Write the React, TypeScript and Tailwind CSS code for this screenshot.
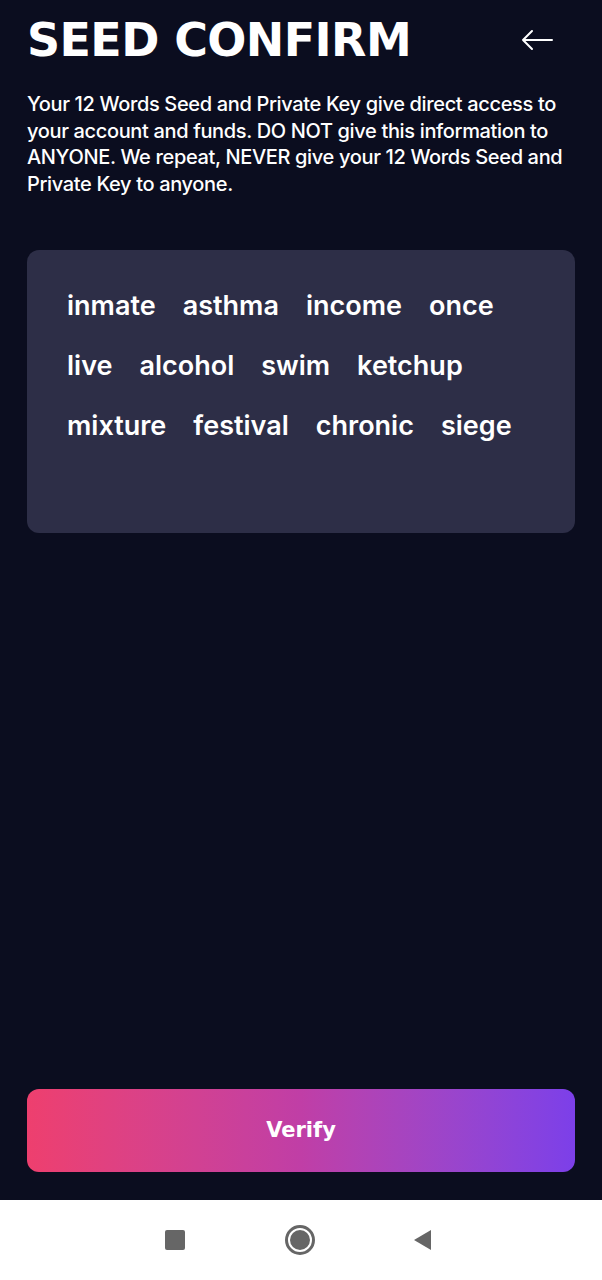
const words = [
  ["inmate", "asthma", "income", "once"],
  ["live", "alcohol", "swim", "ketchup"],
  ["mixture", "festival", "chronic", "siege"],
];

export default function App() {
  return (
    <div className="flex h-[1280px] w-[602px] flex-col bg-[#0b0d1f] font-['Inter','Roboto',sans-serif] text-white">
      <main className="flex flex-1 flex-col px-[27px]">
        <div className="flex items-center justify-between pt-[14px]">
          <h1 className="font-['DejaVu_Sans',sans-serif] text-[46px] font-bold leading-[52px] tracking-[-0.6px]">
            SEED CONFIRM
          </h1>
          <svg width="34" height="24" viewBox="0 0 34 24" className="mr-[21px]" fill="none" stroke="white" strokeWidth="2" strokeLinecap="round" strokeLinejoin="round">
            <path d="M32 12H3M12 3L3 12l9 9" />
          </svg>
        </div>

        <p className="mt-[25px] text-[20px] font-medium leading-[26.7px] tracking-[-0.35px]">
          Your 12 Words Seed and Private Key give direct access to your account and funds. DO NOT give this information to ANYONE. We repeat, NEVER give your 12 Words Seed and Private Key to anyone.
        </p>

        <div className="mt-[52px] h-[283px] rounded-xl bg-[#2d2e47] px-[40px] pt-[40px]">
          <div className="flex flex-col gap-[28px]">
            {words.map((row, i) => (
              <div key={i} className="flex gap-[27px] text-[27px] font-semibold leading-[32px]">
                {row.map((w) => (
                  <span key={w}>{w}</span>
                ))}
              </div>
            ))}
          </div>
        </div>

        <div className="flex-1" />

        <button className="mb-[28px] flex h-[83px] items-center justify-center rounded-xl bg-gradient-to-r from-[#ee3f6e] via-[#c03ea6] to-[#7c3fe9] font-['DejaVu_Sans',sans-serif] text-[21px] font-bold">
          Verify
        </button>
      </main>

      <nav className="flex h-[80px] items-center bg-white pl-[165px]">
        <div className="h-[20px] w-[20px] rounded-[2px] bg-[#666666]" />
        <div className="ml-[100px] flex h-[30px] w-[30px] items-center justify-center rounded-full border-[3px] border-[#666666]">
          <div className="h-[20px] w-[20px] rounded-full bg-[#666666]" />
        </div>
        <svg width="20" height="22" viewBox="0 0 20 22" className="ml-[97px]">
          <path d="M19 1L2 11l17 10z" fill="#666666" />
        </svg>
      </nav>
    </div>
  );
}
